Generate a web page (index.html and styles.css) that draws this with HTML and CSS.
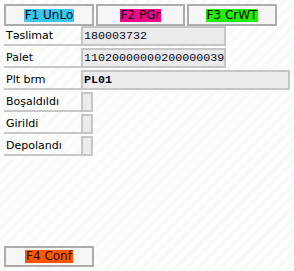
FILE: index.html
```html
<!DOCTYPE html>
<html lang="az">
<head>
  <meta charset="UTF-8">
  <title>Təslimat</title>
  <link rel="stylesheet" href="styles.css">
</head>
<body>
<div class="screen">
  <div class="btns">
    <div class="btn"><span class="key k1">F1 UnLo</span></div>
    <div class="btn"><span class="key k2">F2 PGr</span></div>
    <div class="btn"><span class="key k3">F3 CrWT</span></div>
  </div>

  <div class="rows">
    <div class="row">
      <div class="lbl">Təslimat</div>
      <div class="fld w1">180003732</div>
    </div>
    <div class="row">
      <div class="lbl">Palet</div>
      <div class="fld w1">11020000000200000039</div>
    </div>
    <div class="row">
      <div class="lbl">Plt brm</div>
      <div class="fld w2 bold">PL01</div>
    </div>
    <div class="row">
      <div class="lbl">Boşaldıldı</div>
      <div class="chk"></div>
    </div>
    <div class="row">
      <div class="lbl">Girildi</div>
      <div class="chk"></div>
    </div>
    <div class="row">
      <div class="lbl">Depolandı</div>
      <div class="chk"></div>
    </div>
  </div>

  <div class="foot">
    <div class="btn"><span class="key k4">F4 Conf</span></div>
  </div>
</div>
</body>
</html>
```

FILE: styles.css
```css
* {
  margin: 0;
  padding: 0;
  box-sizing: border-box;
}
html, body {
  height: 100%;
}
body {
  background: repeating-linear-gradient(-45deg, #ffffff 0, #ffffff 4px, #f6fbf6 4px, #f6fbf6 8px);
  font-family: "DejaVu Sans", Verdana, sans-serif;
  font-size: 11px;
  color: #000;
}

.screen {
  height: 271px;
  padding: 4px 0 4px 4px;
  display: flex;
  flex-direction: column;
}

.btns {
  display: flex;
  gap: 2px;
}
.btn {
  width: 90px;
  height: 22px;
  border: 2px solid #acacac;
  background: #f6f6f6;
  display: flex;
  align-items: center;
  justify-content: center;
  font-size: 12px;
}
.btns .btn:nth-child(2) {
  width: 89px;
}
.key {
  padding: 0 1px;
  line-height: 13px;
}
.k1 { background: #3cc6f2; }
.k2 { background: #f0088c; }
.k3 { background: #22ee00; }
.k4 { background: #ff5500; color: #221100; }

.rows {
  margin-top: -2px;
}
.row {
  display: flex;
  align-items: flex-end;
  height: 22px;
}
.lbl {
  width: 77px;
  height: 22px;
  padding: 5px 0 0 2px;
  border-bottom: 2px solid #c8c8c8;
  white-space: nowrap;
}
.fld {
  height: 20px;
  border: 2px solid #c6c6c6;
  background: #ebebeb;
  padding: 0 0 0 1px;
  font-family: "Liberation Mono", "Courier New", monospace;
  font-size: 11.7px;
  line-height: 16px;
  color: #0a0a20;
  white-space: nowrap;
  overflow: hidden;
}
.w1 { width: 145px; }
.w2 { width: 209px; }
.bold { font-weight: bold; }

.chk {
  width: 12px;
  height: 20px;
  border: 2px solid #c6c6c6;
  background: #ebebeb;
}

.foot {
  margin-top: auto;
}
.foot .btn {
  height: 21px;
}
```
